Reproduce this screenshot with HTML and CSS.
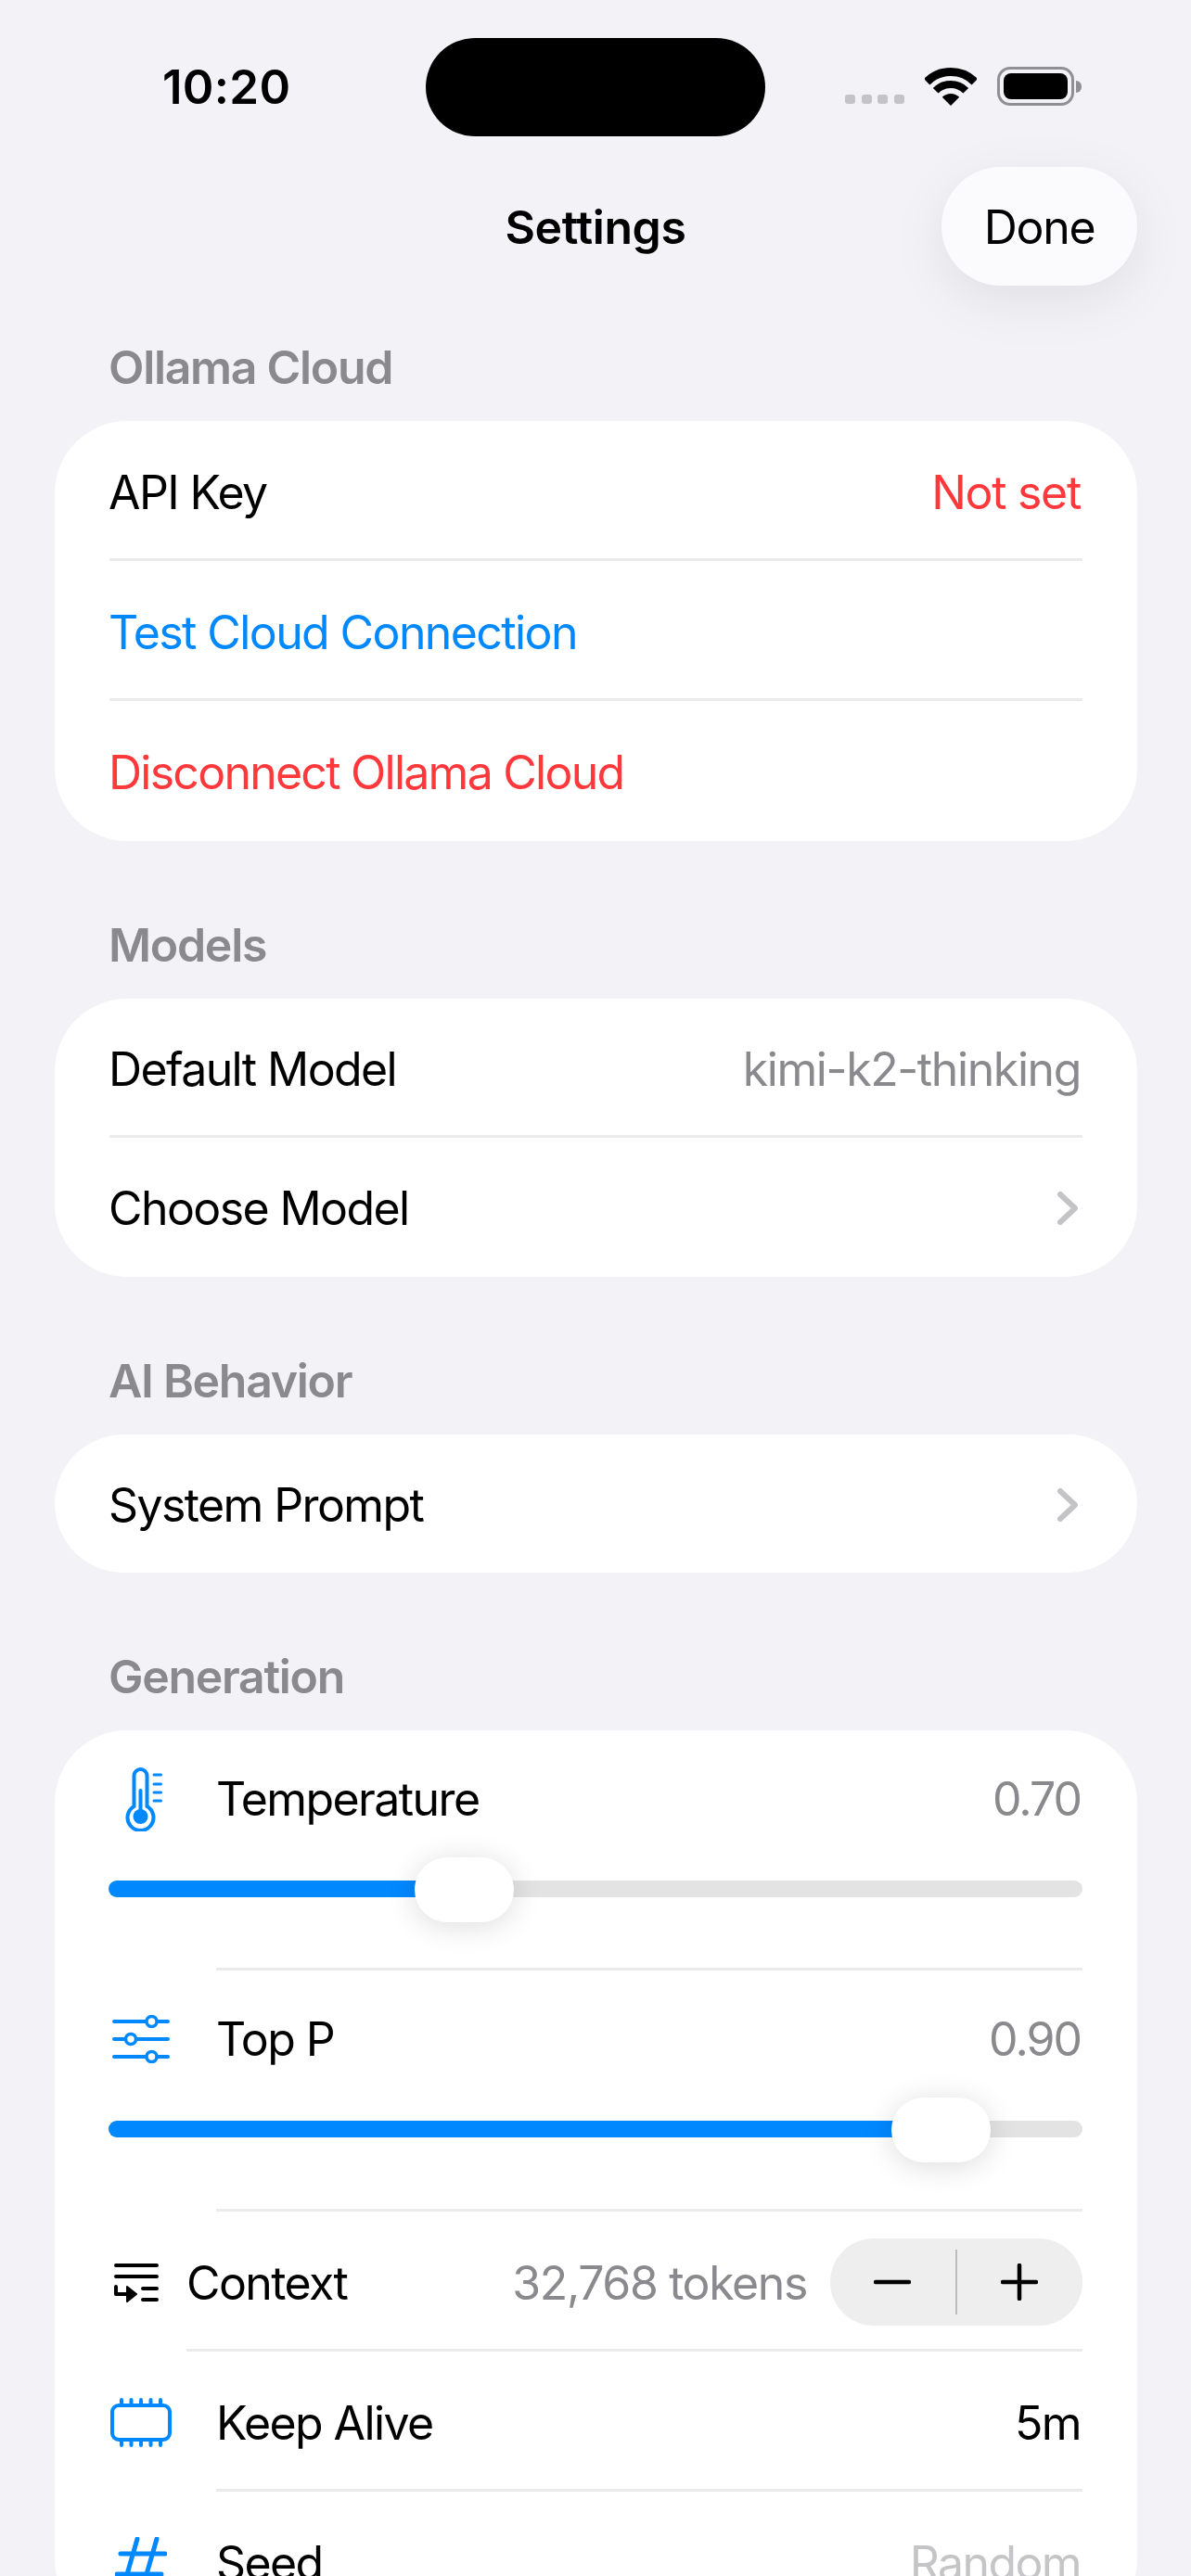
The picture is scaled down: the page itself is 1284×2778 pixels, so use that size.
FILE: index.html
```html
<!DOCTYPE html>
<html lang="en">
<head>
    <meta charset="UTF-8">
    <meta name="viewport" content="width=device-width, initial-scale=1.0">
    <title>Settings</title>
    <link rel="stylesheet" href="styles.css">
</head>
<body>
<div class="screen">

    <div class="status-bar">
        <div class="status-time">10:20</div>
        <div class="island"></div>
        <div class="status-icons">
            <div class="signal"><span></span><span></span><span></span><span></span></div>
            <svg class="wifi" width="56" height="41" viewBox="0 0 56 41">
                <path d="M2.2 15.2A36.5 36.5 0 0 1 53.8 15.2" fill="none" stroke="#000" stroke-width="9"/>
                <path d="M11.7 24.7A23 23 0 0 1 44.3 24.7" fill="none" stroke="#000" stroke-width="8"/>
                <path d="M28 41L18.8 31.8A13 13 0 0 1 37.2 31.8Z" fill="#000"/>
            </svg>
            <div class="battery"><div class="battery-level"></div></div>
            <div class="battery-cap"></div>
        </div>
    </div>

    <div class="nav-bar">
        <div></div>
        <div class="nav-title">Settings</div>
        <div class="nav-right"><button class="done-btn">Done</button></div>
    </div>

    <div class="section-title">Ollama Cloud</div>
    <div class="card">
        <div class="row"><span>API Key</span><span class="text-red text-value">Not set</span></div>
        <div class="sep"></div>
        <div class="row"><span class="text-blue">Test Cloud Connection</span></div>
        <div class="sep"></div>
        <div class="row"><span class="text-red text-action">Disconnect Ollama Cloud</span></div>
    </div>

    <div class="section-title">Models</div>
    <div class="card">
        <div class="row row-short"><span>Default Model</span><span class="text-gray">kimi-k2-thinking</span></div>
        <div class="sep"></div>
        <div class="row row-short">
            <span>Choose Model</span>
            <svg class="chevron" width="22" height="36" viewBox="0 0 22 36"><path d="M3 3L19 18L3 33" fill="none" stroke="#c4c4c7" stroke-width="6" stroke-linecap="round" stroke-linejoin="round"/></svg>
        </div>
    </div>

    <div class="section-title">AI Behavior</div>
    <div class="card">
        <div class="row row-single">
            <span>System Prompt</span>
            <svg class="chevron" width="22" height="36" viewBox="0 0 22 36"><path d="M3 3L19 18L3 33" fill="none" stroke="#c4c4c7" stroke-width="6" stroke-linecap="round" stroke-linejoin="round"/></svg>
        </div>
    </div>

    <div class="section-title">Generation</div>
    <div class="card">
        <div class="slider-block">
            <div class="slider-head">
                <div class="icon-box">
                    <svg width="46" height="69" viewBox="-6 0 46 69">
                        <path d="M9.5 41.900V9A7 7 0 0 1 23.500 9V41.900A14 14 0 1 1 9.500 41.900Z" fill="none" stroke="#0088ff" stroke-width="4"/>
                        <circle cx="16.500" cy="53" r="8" fill="#0088ff"/>
                        <path d="M16.500 25V53" stroke="#0088ff" stroke-width="4" stroke-linecap="round"/>
                        <path d="M31 8H38.500M31 18H38.500M31 27H38.500M31 36H38.500" stroke="#0088ff" stroke-width="3" stroke-linecap="round"/>
                    </svg>
                </div>
                <span class="grow">Temperature</span>
                <span class="text-gray text-number">0.70</span>
            </div>
            <div class="track"><div class="track-fill" style="width: 383px"><div class="thumb"></div></div></div>
        </div>
        <div class="sep sep-icon"></div>
        <div class="slider-block slider-block-tall">
            <div class="slider-head">
                <div class="icon-box">
                    <svg width="62" height="52" viewBox="0 0 62 52">
                        <path d="M2 7H60M2 26H60M2 45H60" stroke="#0088ff" stroke-width="4" stroke-linecap="round"/>
                        <circle cx="42.500" cy="7" r="5.500" fill="#fff" stroke="#0088ff" stroke-width="3.500"/>
                        <circle cx="20" cy="26" r="5.500" fill="#fff" stroke="#0088ff" stroke-width="3.500"/>
                        <circle cx="42.500" cy="45" r="5.500" fill="#fff" stroke="#0088ff" stroke-width="3.500"/>
                    </svg>
                </div>
                <span class="grow">Top P</span>
                <span class="text-gray text-number">0.90</span>
            </div>
            <div class="track"><div class="track-fill" style="width: 897px"><div class="thumb"></div></div></div>
        </div>
        <div class="sep sep-icon"></div>
        <div class="row">
            <svg class="context-icon" width="48" height="42" viewBox="0 0 48 42">
                <path d="M2 2H46M2 14H46M31 27H46M31 39H46" stroke="#000" stroke-width="4" stroke-linecap="round"/>
                <path d="M2 25V33H15" fill="none" stroke="#000" stroke-width="4" stroke-linecap="round" stroke-linejoin="round"/>
                <path d="M14 25L24 33L14 41Z" fill="#000" stroke="#000" stroke-width="2" stroke-linejoin="round"/>
            </svg>
            <span class="grow">Context</span>
            <span class="text-gray">32,768 tokens</span>
            <div class="stepper">
                <div class="stepper-btn">
                    <svg width="40" height="40" viewBox="0 0 40 40"><path d="M2 20H38" stroke="#000" stroke-width="4.500" stroke-linecap="round"/></svg>
                </div>
                <div class="stepper-line"></div>
                <div class="stepper-btn">
                    <svg width="40" height="40" viewBox="0 0 40 40"><path d="M2 20H38M20 2V38" stroke="#000" stroke-width="4.500" stroke-linecap="round"/></svg>
                </div>
            </div>
        </div>
        <div class="sep sep-context"></div>
        <div class="row">
            <div class="icon-box">
                <svg width="66" height="53" viewBox="0 0 66 53">
                    <rect x="2" y="8" width="62" height="37" rx="7" fill="none" stroke="#0088ff" stroke-width="4"/>
                    <path d="M12 2V8M22.500 2V8M33 2V8M43.500 2V8M54 2V8M12 45V51M22.500 45V51M33 45V51M43.500 45V51M54 45V51" stroke="#0088ff" stroke-width="4" stroke-linecap="round"/>
                </svg>
            </div>
            <span class="grow">Keep Alive</span>
            <span>5m</span>
        </div>
        <div class="sep sep-icon"></div>
        <div class="row">
            <div class="icon-box">
                <svg width="56" height="56" viewBox="0 0 56 56">
                    <path d="M6 18H54M2 40H50M24 2L9 54M45 2L30 54" stroke="#0088ff" stroke-width="5" stroke-linecap="round"/>
                </svg>
            </div>
            <span class="grow">Seed</span>
            <span class="text-light">Random</span>
        </div>
    </div>

</div>
</body>
</html>
```

FILE: styles.css
```css
* {
    box-sizing: border-box;
}
body {
    margin: 0;
    font-family: Inter, "Noto Sans", sans-serif;
    color: #000;
}
.screen {
    width: 1284px;
    height: 2778px;
    overflow: hidden;
    background-color: #f2f2f7;
    font-size: 50px;
    letter-spacing: -1.6px;
}

/* status bar */
.status-bar {
    display: grid;
    grid-template-columns: 459px 366px 1fr;
    height: 180px;
    padding-top: 41px;
}
.status-time {
    height: 106px;
    line-height: 106px;
    padding-left: 175px;
    font-size: 51px;
    font-weight: 600;
    letter-spacing: 0.3px;
}
.island {
    height: 106px;
    border-radius: 53px;
    background-color: #000;
}
.status-icons {
    display: flex;
    align-items: flex-end;
    height: 73px;
    padding-left: 86px;
}
.signal {
    display: flex;
    gap: 6.500px;
    margin-bottom: 2px;
}
.signal span {
    width: 11px;
    height: 10px;
    border-radius: 3px;
    background-color: #c4c4c8;
}
.wifi {
    margin-left: 22px;
}
.battery {
    width: 83px;
    height: 42px;
    margin-left: 22px;
    padding: 4px;
    border: 3px solid #909094;
    border-radius: 14px;
}
.battery-level {
    height: 100%;
    border-radius: 8px;
    background-color: #000;
}
.battery-cap {
    width: 6px;
    height: 13px;
    margin-left: 2px;
    margin-bottom: 14px;
    border-radius: 0 7px 7px 0;
    background-color: #909094;
}

/* nav */
.nav-bar {
    display: grid;
    grid-template-columns: 1fr auto 1fr;
    height: 104px;
}
.nav-title {
    line-height: 130px;
    font-weight: 600;
    letter-spacing: -0.4px;
}
.nav-right {
    display: flex;
    justify-content: flex-end;
    padding-right: 58px;
}
.done-btn {
    width: 211px;
    height: 128px;
    padding: 2px 0 0;
    border: none;
    border-radius: 64px;
    background-color: #fbfbfe;
    box-shadow: 0 16px 60px rgba(0, 0, 0, 0.08);
    font: inherit;
    letter-spacing: -1.3px;
    color: #000;
}

/* sections */
.section-title {
    height: 60px;
    line-height: 60px;
    margin: 82px 0 28px;
    padding-left: 117px;
    font-weight: 600;
    letter-spacing: -1.3px;
    color: #8a8a8e;
}
.card {
    margin: 0 58px 0 59px;
    border-radius: 78px;
    background-color: #fff;
}
.row {
    display: flex;
    align-items: center;
    justify-content: space-between;
    height: 151px;
    padding: 2px 61px 0 58px;
}
.row-short {
    height: 150px;
}
.row-single {
    height: 149px;
}
.sep {
    position: relative;
    height: 3px;
    margin: -3px 59px 0;
    background-color: #ebebec;
}
.sep-icon {
    margin-left: 174px;
}
.sep-context {
    margin-left: 142px;
}
.text-red {
    color: #ff383c;
}
.text-value {
    letter-spacing: -1.3px;
}
.text-action {
    letter-spacing: -1.75px;
}
.text-blue {
    color: #0088ff;
}
.text-gray {
    letter-spacing: -1.4px;
    color: #8a8a8e;
}
.text-number {
    letter-spacing: -2px;
}
.text-light {
    color: #c5c5c7;
}
.grow {
    flex: 1;
}
.chevron {
    margin-right: 3px;
}

/* generation card */
.slider-block {
    height: 259px;
    padding: 0 59px 0 58px;
}
.slider-block-tall {
    height: 260px;
}
.slider-head {
    display: flex;
    align-items: center;
    height: 148px;
    padding-right: 2px;
}
.icon-box {
    display: flex;
    justify-content: center;
    flex-shrink: 0;
    width: 68px;
    margin-left: 1px;
    margin-right: 47px;
}
.track {
    height: 18px;
    margin-top: 14px;
    border-radius: 9px;
    background-color: #e3e3e4;
}
.track-fill {
    position: relative;
    height: 100%;
    border-radius: 9px;
    background-color: #0088ff;
}
.thumb {
    position: absolute;
    top: -25px;
    right: -54px;
    width: 107px;
    height: 70px;
    border-radius: 35px;
    background-color: #fff;
    box-shadow: 0 4px 32px rgba(0, 0, 0, 0.14);
}
.context-icon {
    margin-left: 6px;
    margin-right: 30px;
}
.stepper {
    display: flex;
    align-items: center;
    flex-shrink: 0;
    width: 272px;
    height: 94px;
    margin-left: 25px;
    margin-right: -2px;
    margin-top: -2px;
    border-radius: 47px;
    background-color: #eeeeef;
}
.stepper-btn {
    display: flex;
    flex: 1;
    align-items: center;
    justify-content: center;
}
.stepper-btn svg {
    margin-right: 2px;
}
.stepper-line {
    width: 2px;
    height: 70px;
    background-color: #bcbcbe;
}
```
